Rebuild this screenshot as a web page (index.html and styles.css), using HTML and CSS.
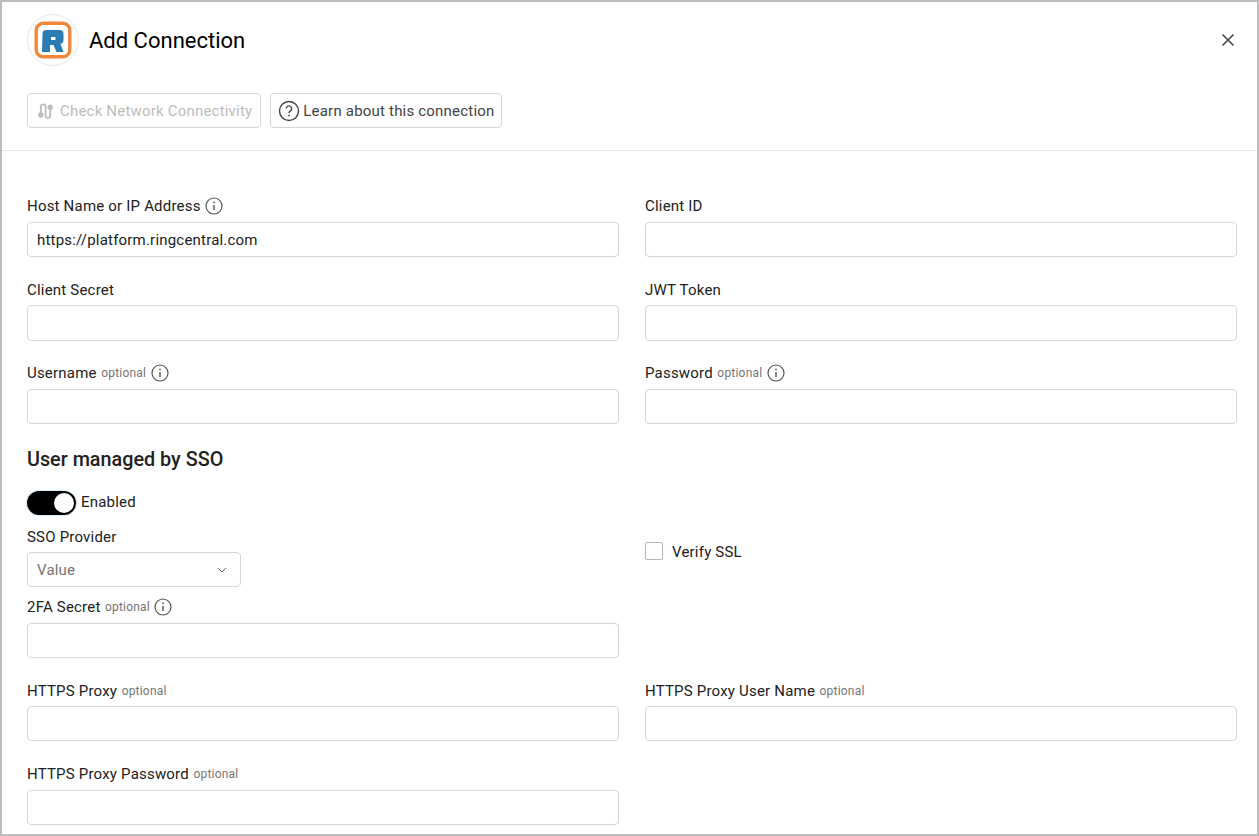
FILE: index.html
```html
<!DOCTYPE html>
<html lang="en">
<head>
    <meta charset="UTF-8">
    <meta name="viewport" content="width=device-width, initial-scale=1.0">
    <title>Add Connection</title>
    <link rel="stylesheet" href="styles.css">
</head>
<body>
    <div class="dialog">
        <div class="header">
            <div class="logo">
                <svg width="38" height="38" viewBox="0 0 38 38">
                    <rect x="2.200" y="2.200" width="33.600" height="33.600" rx="7" fill="#fff" stroke="#f0883a" stroke-width="3.400"/>
                    <path d="M8.500 13q0-4 4-4h13q4 0 4 4v6q0 3-3 4l3 8h-7l-3-7h-3.500v7h-8zM17 16v3h4.500v-3z" fill="#2b7cb3" fill-rule="evenodd"/>
                </svg>
            </div>
            <h1>Add Connection</h1>
            <svg class="close" width="14" height="14" viewBox="0 0 14 14">
                <path d="M1.500 1.500l11 11M12.500 1.500l-11 11" stroke="#444" stroke-width="1.600" fill="none"/>
            </svg>
        </div>

        <div class="toolbar">
            <button class="tool-button disabled">
                <svg width="18" height="20" viewBox="0 0 18 20" fill="none" stroke="#bdbdbd" stroke-width="1.800">
                    <path d="M4.800 13V5.800a2.400 2.400 0 0 1 4.800 0v8.700a2.300 2.300 0 0 0 4.600 0V7"/>
                    <circle cx="4.800" cy="14" r="1.800" fill="#bdbdbd"/>
                    <circle cx="14.200" cy="6.200" r="1.800" fill="#bdbdbd"/>
                </svg>
                Check Network Connectivity
            </button>
            <button class="tool-button learn">
                <svg width="22" height="22" viewBox="0 0 22 22" fill="none">
                    <circle cx="11" cy="11" r="9.500" stroke="#444" stroke-width="1.400"/>
                    <path d="M8.300 8.600a2.700 2.700 0 1 1 4.100 2.300c-.9.600-1.400 1-1.400 2.100" stroke="#444" stroke-width="1.400"/>
                    <circle cx="11" cy="15.600" r=".9" fill="#444"/>
                </svg>
                Learn about this connection
            </button>
        </div>

        <div class="form">
            <div class="row">
                <div class="field">
                    <label>Host Name or IP Address <svg class="info" viewBox="0 0 18 18"><use href="#info"/></svg></label>
                    <input type="text" class="input" value="https://platform.ringcentral.com">
                </div>
                <div class="field">
                    <label>Client ID</label>
                    <input type="text" class="input">
                </div>
            </div>
            <div class="row">
                <div class="field">
                    <label>Client Secret</label>
                    <input type="text" class="input">
                </div>
                <div class="field">
                    <label>JWT Token</label>
                    <input type="text" class="input">
                </div>
            </div>
            <div class="row">
                <div class="field">
                    <label>Username <span class="optional">optional</span> <svg class="info" viewBox="0 0 18 18"><use href="#info"/></svg></label>
                    <input type="text" class="input">
                </div>
                <div class="field">
                    <label>Password <span class="optional">optional</span> <svg class="info" viewBox="0 0 18 18"><use href="#info"/></svg></label>
                    <input type="text" class="input">
                </div>
            </div>

            <h2>User managed by SSO</h2>
            <div class="toggle-line">
                <span class="toggle"><span class="knob"></span></span>
                <span class="toggle-label">Enabled</span>
            </div>

            <div class="row sso-row">
                <div class="sso-left">
                    <div class="field tight">
                        <label>SSO Provider</label>
                        <div class="select">
                            Value
                            <svg width="10" height="6" viewBox="0 0 10 6"><path d="M1 1l4 4 4-4" stroke="#666" fill="none"/></svg>
                        </div>
                    </div>
                    <div class="field">
                        <label>2FA Secret <span class="optional">optional</span> <svg class="info" viewBox="0 0 18 18"><use href="#info"/></svg></label>
                        <input type="text" class="input">
                    </div>
                </div>
                <div class="verify">
                    <span class="checkbox"></span>
                    <span class="verify-label">Verify SSL</span>
                </div>
            </div>

            <div class="row">
                <div class="field">
                    <label>HTTPS Proxy <span class="optional">optional</span></label>
                    <input type="text" class="input">
                </div>
                <div class="field">
                    <label>HTTPS Proxy User Name <span class="optional">optional</span></label>
                    <input type="text" class="input">
                </div>
            </div>
            <div class="row">
                <div class="field">
                    <label>HTTPS Proxy Password <span class="optional">optional</span></label>
                    <input type="text" class="input">
                </div>
            </div>
        </div>
    </div>

    <svg width="0" height="0" class="defs">
        <symbol id="info" viewBox="0 0 18 18">
            <circle cx="9" cy="9" r="8" fill="none" stroke="#555" stroke-width="1.200"/>
            <path d="M9 8v5" stroke="#555" stroke-width="1.400"/>
            <circle cx="9" cy="5.400" r=".9" fill="#555"/>
        </symbol>
    </svg>
</body>
</html>
```

FILE: styles.css
```css
html, body {
    margin: 0;
    padding: 0;
    height: 100%;
}
body {
    font-family: Roboto, "Liberation Sans", sans-serif;
    font-size: 15px;
    letter-spacing: 0.2px;
    color: #212121;
    background-color: #fff;
    overflow: hidden;
}
.defs {
    position: absolute;
}
.dialog {
    height: 836px;
    box-sizing: border-box;
    border: 2px solid #bdbdbd;
    overflow: hidden;
}
.header {
    display: flex;
    align-items: center;
    height: 52px;
    margin-top: 12px;
    padding: 0 22px 0 25px;
}
.logo {
    width: 52px;
    height: 52px;
    box-sizing: border-box;
    border: 1px solid #e4e6ee;
    border-radius: 50%;
    display: flex;
    align-items: center;
    justify-content: center;
    margin-right: 10px;
}
h1 {
    flex: 1;
    margin: 0;
    font-size: 22px;
    font-weight: 400;
    letter-spacing: 0;
    color: #000;
}
.toolbar {
    display: flex;
    gap: 9px;
    padding: 27px 25px 22px;
    border-bottom: 1px solid #e4e6ee;
}
.tool-button {
    display: flex;
    align-items: center;
    gap: 6px;
    height: 35px;
    padding: 0 8px;
    border: 1px solid #d6d6d6;
    border-radius: 4px;
    background-color: #fff;
    font-family: inherit;
    font-size: 15px;
    letter-spacing: inherit;
    color: #444;
}
.tool-button.learn {
    gap: 3px;
    padding: 0 7px;
}
.tool-button.disabled {
    color: #bdbdbd;
}
.form {
    padding: 44px 20px 0 25px;
}
.row {
    display: grid;
    grid-template-columns: 592px 592px;
    column-gap: 26px;
    margin-bottom: 21.35px;
}
.field label {
    display: flex;
    align-items: center;
    gap: 4.5px;
    height: 22.6px;
    margin-bottom: 4.4px;
}
.optional {
    font-size: 12px;
    color: #757575;
}
.info {
    width: 18px;
    height: 18px;
}
.input {
    display: block;
    width: 100%;
    height: 35.1px;
    box-sizing: border-box;
    padding: 1px 9px 0;
    border: 1px solid #d6d6d6;
    border-radius: 4px;
    font-family: inherit;
    font-size: 15px;
    letter-spacing: inherit;
    color: #212121;
}
h2 {
    margin: 24.6px 0 20.4px;
    font-size: 19.8px;
    line-height: 22px;
    font-weight: 500;
    letter-spacing: 0;
    color: #212121;
}
.toggle-line {
    display: flex;
    align-items: center;
    gap: 5px;
    height: 24px;
    margin-bottom: 11.2px;
}
.toggle-label {
    margin-bottom: 2px;
}
.toggle {
    display: flex;
    justify-content: flex-end;
    align-items: center;
    width: 49px;
    height: 24px;
    box-sizing: border-box;
    padding: 2px;
    border-radius: 12px;
    background-color: #000;
    box-shadow: 0 0 0 1px #d9eefb;
}
.knob {
    width: 20px;
    height: 20px;
    border-radius: 50%;
    background-color: #fff;
}
.sso-row {
    align-items: start;
}
.field.tight label {
    margin-bottom: 3.4px;
}
.select {
    display: flex;
    align-items: center;
    justify-content: space-between;
    width: 214px;
    height: 35px;
    box-sizing: border-box;
    padding: 1px 13px 0 9px;
    margin-bottom: 8.8px;
    border: 1px solid #d6d6d6;
    border-radius: 4px;
    color: #757575;
}
.verify {
    display: flex;
    align-items: center;
    gap: 9px;
    height: 18px;
    margin-top: 16px;
}
.verify-label {
    margin-top: 2px;
}
.checkbox {
    width: 18px;
    height: 18px;
    box-sizing: border-box;
    border: 1px solid #b5b5b5;
    border-radius: 2px;
}
```
